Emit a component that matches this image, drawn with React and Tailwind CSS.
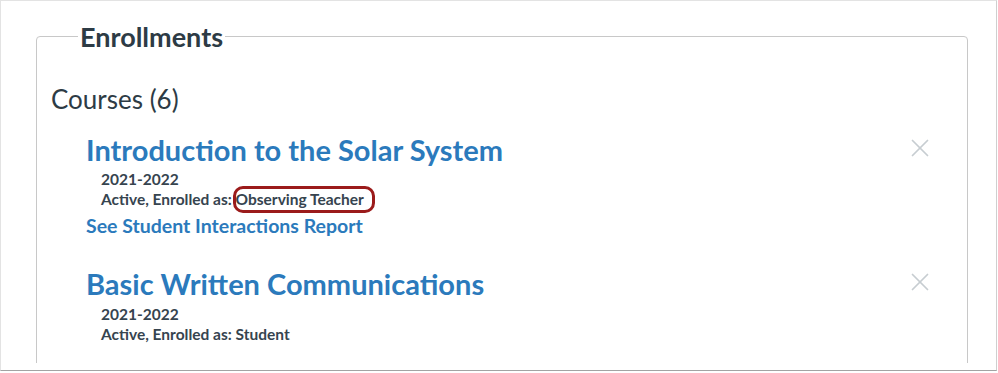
import { X } from "lucide-react";

const courses = [
  {
    title: "Introduction to the Solar System",
    term: "2021-2022",
    role: "Observing Teacher",
    highlight: true,
    report: true,
  },
  {
    title: "Basic Written Communications",
    term: "2021-2022",
    role: "Student",
  },
];

function CourseItem({ course, first }) {
  return (
    <li className={first ? "mt-[23px]" : "mt-[33px]"}>
      <div className="flex items-start justify-between">
        <a className="ml-[35px] text-[29px] leading-none font-bold text-[#2b7abc]">
          {course.title}
        </a>
        <X className="-mt-[2px] h-[30px] w-[30px] text-[#c7cdd1]" strokeWidth={1.4} />
      </div>

      <div
        className={`ml-[50px] text-[15.5px] leading-[20px] font-bold text-[#36444f] ${
          first ? "mt-[5px]" : "mt-[6px]"
        }`}
      >
        <div>{course.term}</div>
        <div>
          Active, Enrolled as:{" "}
          {course.highlight ? (
            <span className="relative">
              {course.role}
              <span className="absolute -top-[4px] -bottom-[5px] -left-[3px] -right-[11px] rounded-[10px] border-[3px] border-[#9b1b1b]" />
            </span>
          ) : (
            course.role
          )}
        </div>
      </div>

      {course.report && (
        <a className="mt-[7px] ml-[35px] block text-[19.5px] leading-none font-bold text-[#2b7abc]">
          See Student Interactions Report
        </a>
      )}
    </li>
  );
}

export default function App() {
  return (
    <div
      className="h-[373px] w-[998px] bg-white"
      style={{ fontFamily: "Lato, 'Noto Sans', sans-serif" }}
    >
      <div className="h-[371px] w-[997px] border border-[#e3e3e3] border-b-[#a3a3a3] border-r-[#cfcfcf]">
        {/* visible page area */}
        <div className="h-[362px] overflow-hidden pt-[22px]">
          <fieldset className="ml-[35px] h-[420px] w-[932px] rounded-t-[4px] border border-[#c8c8c8] pr-[32px] pl-[14px]">
            <legend className="ml-[27px] px-[2px] text-[27px] leading-none font-bold text-[#2d3b45]">
              Enrollments
            </legend>

            <h2 className="mt-[36px] text-[26px] leading-none text-[#2d3b45]">Courses (6)</h2>

            <ul>
              {courses.map((c, i) => (
                <CourseItem key={c.title} course={c} first={i === 0} />
              ))}
            </ul>
          </fieldset>
        </div>
      </div>
    </div>
  );
}
